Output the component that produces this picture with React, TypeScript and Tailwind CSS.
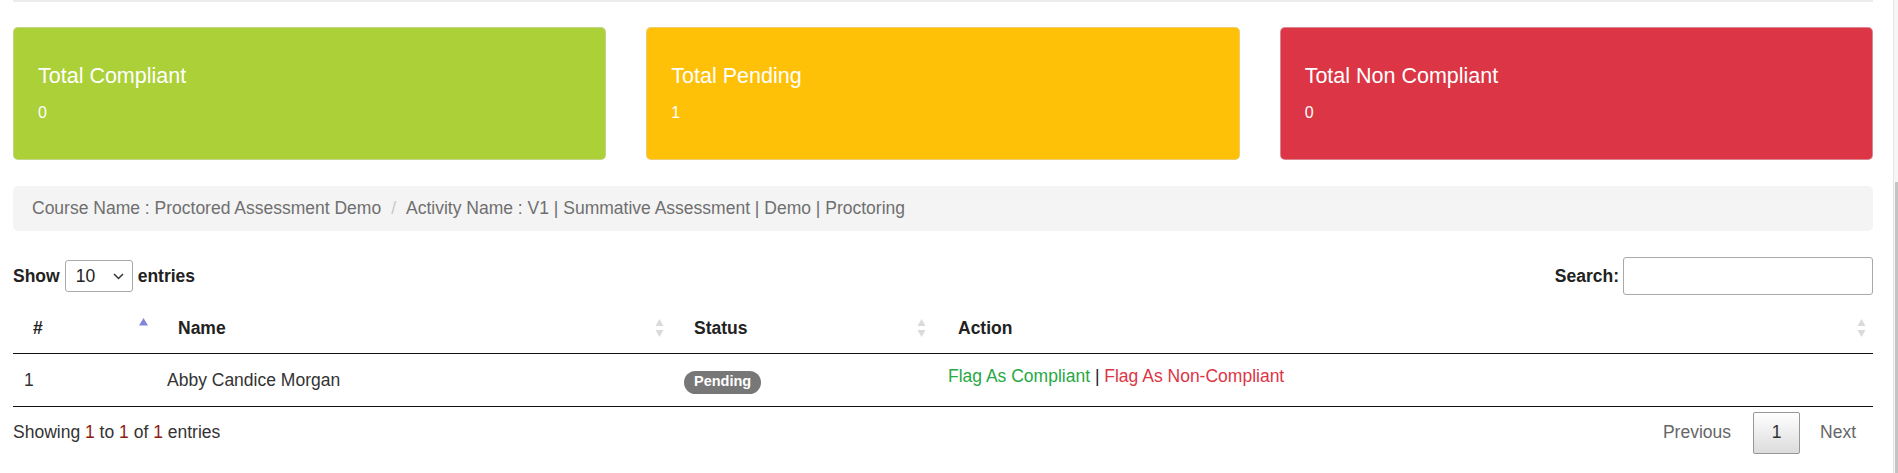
import React from 'react';

const stats = [
  { label: 'Total Compliant', value: 0, bg: 'bg-[#abd038]' },
  { label: 'Total Pending', value: 1, bg: 'bg-[#ffc107]' },
  { label: 'Total Non Compliant', value: 0, bg: 'bg-[#dc3545]' },
];

const SortIcon: React.FC<{ active?: boolean }> = ({ active }) => (
  <svg width="11" height="22" viewBox="0 0 11 22" className="shrink-0">
    {active ? (
      <path d="M5.5 1 L10 8.5 L1 8.5 Z" fill="#8387db" />
    ) : (
      <>
        <path d="M5.5 2 L9.5 9 L1.5 9 Z" fill="#dadada" />
        <path d="M5.5 20 L9.5 13 L1.5 13 Z" fill="#dadada" />
      </>
    )}
  </svg>
);

const App: React.FC = () => {
  return (
    <div className="w-[1898px] h-[473px] overflow-hidden bg-white flex font-['Liberation_Sans',Arial,sans-serif] text-[17.5px] text-[#333]">
      <div className="w-[1893px] shrink-0 pl-[13px] pr-[20px]">
        <div className="h-[2px] bg-[#ececec]" />

        <div className="grid grid-cols-3 gap-[40px] mt-[25px]">
          {stats.map(s => (
            <div
              key={s.label}
              className={`${s.bg} h-[133px] rounded-[5px] border border-[#d8d8d8]/50 text-white pl-[24px] pt-[35px]`}
            >
              <div className="text-[21.5px] leading-[26px]">{s.label}</div>
              <div className="text-[16px] leading-[24px] mt-[12px]">{s.value}</div>
            </div>
          ))}
        </div>

        <div className="mt-[26px] h-[45px] rounded-[5px] bg-[#f4f4f4] flex items-center pl-[19px] text-[#6f6f6f]">
          <span>Course Name : Proctored Assessment Demo</span>
          <span className="px-[10px] text-[#c8c8c8]">/</span>
          <span>Activity Name : V1 | Summative Assessment | Demo | Proctoring</span>
        </div>

        <div className="mt-[26px] h-[38px] flex items-center justify-between">
          <label className="flex items-center font-bold text-[#222]">
            Show
            <div className="mx-[5px] w-[68px] h-[32px] border border-[#a9a9a9] rounded-[3px] flex items-center justify-between pl-[10px] pr-[8px] font-normal text-[#222]">
              <span>10</span>
              <svg width="11" height="7" viewBox="0 0 11 7">
                <path d="M1 1 L5.5 5.5 L10 1" stroke="#333" strokeWidth="1.5" fill="none" />
              </svg>
            </div>
            entries
          </label>
          <label className="flex items-center font-bold text-[#222]">
            Search:
            <div className="ml-[4px] w-[250px] h-[38px] border border-[#a9a9a9] rounded-[3px]" />
          </label>
        </div>

        <table className="mt-[8px] w-full table-fixed border-collapse">
          <colgroup>
            <col className="w-[145px]" />
            <col className="w-[516px]" />
            <col className="w-[264px]" />
            <col />
          </colgroup>
          <thead>
            <tr className="h-[50px] border-b border-[#111] text-[#222] font-bold">
              <th className="text-left pl-[20px] pr-[9px]">
                <div className="flex items-center justify-between"><span>#</span><SortIcon active /></div>
              </th>
              <th className="text-left pl-[20px] pr-[9px]">
                <div className="flex items-center justify-between"><span>Name</span><SortIcon /></div>
              </th>
              <th className="text-left pl-[20px] pr-[11px]">
                <div className="flex items-center justify-between"><span>Status</span><SortIcon /></div>
              </th>
              <th className="text-left pl-[20px] pr-[6px]">
                <div className="flex items-center justify-between"><span>Action</span><SortIcon /></div>
              </th>
            </tr>
          </thead>
          <tbody>
            <tr className="h-[53px] border-b border-[#111]">
              <td className="pl-[11px] pt-[2px]">1</td>
              <td className="pl-[9px] pt-[2px]">Abby Candice Morgan</td>
              <td className="pl-[10px] pt-[2px]">
                <span className="inline-flex items-center h-[23px] px-[10px] rounded-full bg-[#777] text-white text-[14.5px] font-bold">Pending</span>
              </td>
              <td className="pl-[10px] pb-[6px]">
                <span className="text-[#28a745]">Flag As Compliant</span>
                <span className="text-[#222]"> | </span>
                <span className="text-[#dc3545]">Flag As Non-Compliant</span>
              </td>
            </tr>
          </tbody>
        </table>

        <div className="flex items-center justify-between mt-[5px]">
          <div>
            Showing <span className="text-[#8b1c12]">1</span> to <span className="text-[#8b1c12]">1</span> of <span className="text-[#8b1c12]">1</span> entries
          </div>
          <div className="flex items-center text-[#666] mr-[17px]">
            <span className="mr-[22px]">Previous</span>
            <span className="w-[47px] h-[42px] flex items-center justify-center border border-[#979797] rounded-[2px] bg-gradient-to-b from-white to-[#dcdcdc] text-[#333]">1</span>
            <span className="ml-[20px]">Next</span>
          </div>
        </div>
      </div>
      <div className="w-[5px] shrink-0 bg-[#f6f6f6] border-l border-[#e4e4e4] flex flex-col">
        <div className="mt-[182px] flex-1 ml-[1px] bg-[#c4c4c4]" />
      </div>
    </div>
  );
};

export default App;
